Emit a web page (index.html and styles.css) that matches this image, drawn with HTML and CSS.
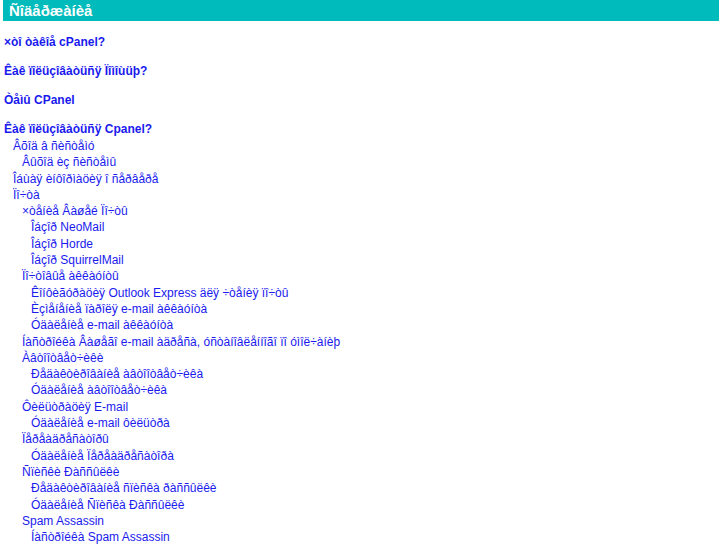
FILE: index.html
```html
<!DOCTYPE html>
<html lang="ru">
<head>
    <meta charset="UTF-8">
    <title>Ñîäåðæàíèå</title>
    <link rel="stylesheet" href="styles.css">
</head>
<body>
    <div class="title">Ñîäåðæàíèå</div>

    <a class="head" href="#">×òî òàêîå cPanel?</a>
    <a class="head" href="#">Êàê ïîëüçîâàòüñÿ Ïîìîùüþ?</a>
    <a class="head" href="#">Òåìû CPanel</a>
    <a class="head" href="#">Êàê ïîëüçîâàòüñÿ Cpanel?</a>

    <ul class="toc">
        <li><a href="#">Âõîä â ñèñòåìó</a>
            <ul>
                <li><a href="#">Âûõîä èç ñèñòåìû</a></li>
            </ul>
        </li>
        <li><a href="#">Îáùàÿ èíôîðìàöèÿ î ñåðâåðå</a></li>
        <li><a href="#">Ïî÷òà</a>
            <ul>
                <li><a href="#">×òåíèå Âàøåé Ïî÷òû</a>
                    <ul>
                        <li><a href="#">Îáçîð NeoMail</a></li>
                        <li><a href="#">Îáçîð Horde</a></li>
                        <li><a href="#">Îáçîð SquirrelMail</a></li>
                    </ul>
                </li>
                <li><a href="#">Ïî÷òîâûå àêêàóíòû</a>
                    <ul>
                        <li><a href="#">Êîíôèãóðàöèÿ Outlook Express äëÿ ÷òåíèÿ ïî÷òû</a></li>
                        <li><a href="#">Èçìåíåíèå ïàðîëÿ e-mail àêêàóíòà</a></li>
                        <li><a href="#">Óäàëåíèå e-mail àêêàóíòà</a></li>
                    </ul>
                </li>
                <li><a href="#">Íàñòðîéêà Âàøåãî e-mail àäðåñà, óñòàíîâëåííîãî ïî óìîë÷àíèþ</a></li>
                <li><a href="#">Àâòîîòâåò÷èêè</a>
                    <ul>
                        <li><a href="#">Ðåäàêòèðîâàíèå àâòîîòâåò÷èêà</a></li>
                        <li><a href="#">Óäàëåíèå àâòîîòâåò÷èêà</a></li>
                    </ul>
                </li>
                <li><a href="#">Ôèëüòðàöèÿ E-mail</a>
                    <ul>
                        <li><a href="#">Óäàëåíèå e-mail ôèëüòðà</a></li>
                    </ul>
                </li>
                <li><a href="#">Ïåðåàäðåñàòîðû</a>
                    <ul>
                        <li><a href="#">Óäàëåíèå Ïåðåàäðåñàòîðà</a></li>
                    </ul>
                </li>
                <li><a href="#">Ñïèñêè Ðàññûëêè</a>
                    <ul>
                        <li><a href="#">Ðåäàêòèðîâàíèå ñïèñêà ðàññûëêè</a></li>
                        <li><a href="#">Óäàëåíèå Ñïèñêà Ðàññûëêè</a></li>
                    </ul>
                </li>
                <li><a href="#">Spam Assassin</a>
                    <ul>
                        <li><a href="#">Íàñòðîéêà Spam Assassin</a></li>
                    </ul>
                </li>
            </ul>
        </li>
    </ul>
</body>
</html>
```

FILE: styles.css
```css
body {
    margin: 0;
    font-family: "Liberation Sans", Arial, sans-serif;
    background-color: #fff;
}
a {
    color: #1a1aee;
    text-decoration: none;
}
.title {
    margin: 0 8px 0 3px;
    padding: 0 6px;
    height: 21px;
    line-height: 21px;
    background-color: #00bbbb;
    color: #fff;
    font-size: 15px;
    font-weight: bold;
}
.head {
    display: block;
    margin: 15px 0 0 4px;
    font-size: 12px;
    font-weight: bold;
    line-height: 14px;
}
.title + .head {
    margin-top: 14px;
}
.toc {
    margin: 2px 0 0;
    padding-left: 13px;
    font-size: 12px;
    line-height: 16.3px;
}
.toc ul {
    margin: 0;
    padding-left: 9px;
}
.toc, .toc ul {
    list-style: none;
}
```
